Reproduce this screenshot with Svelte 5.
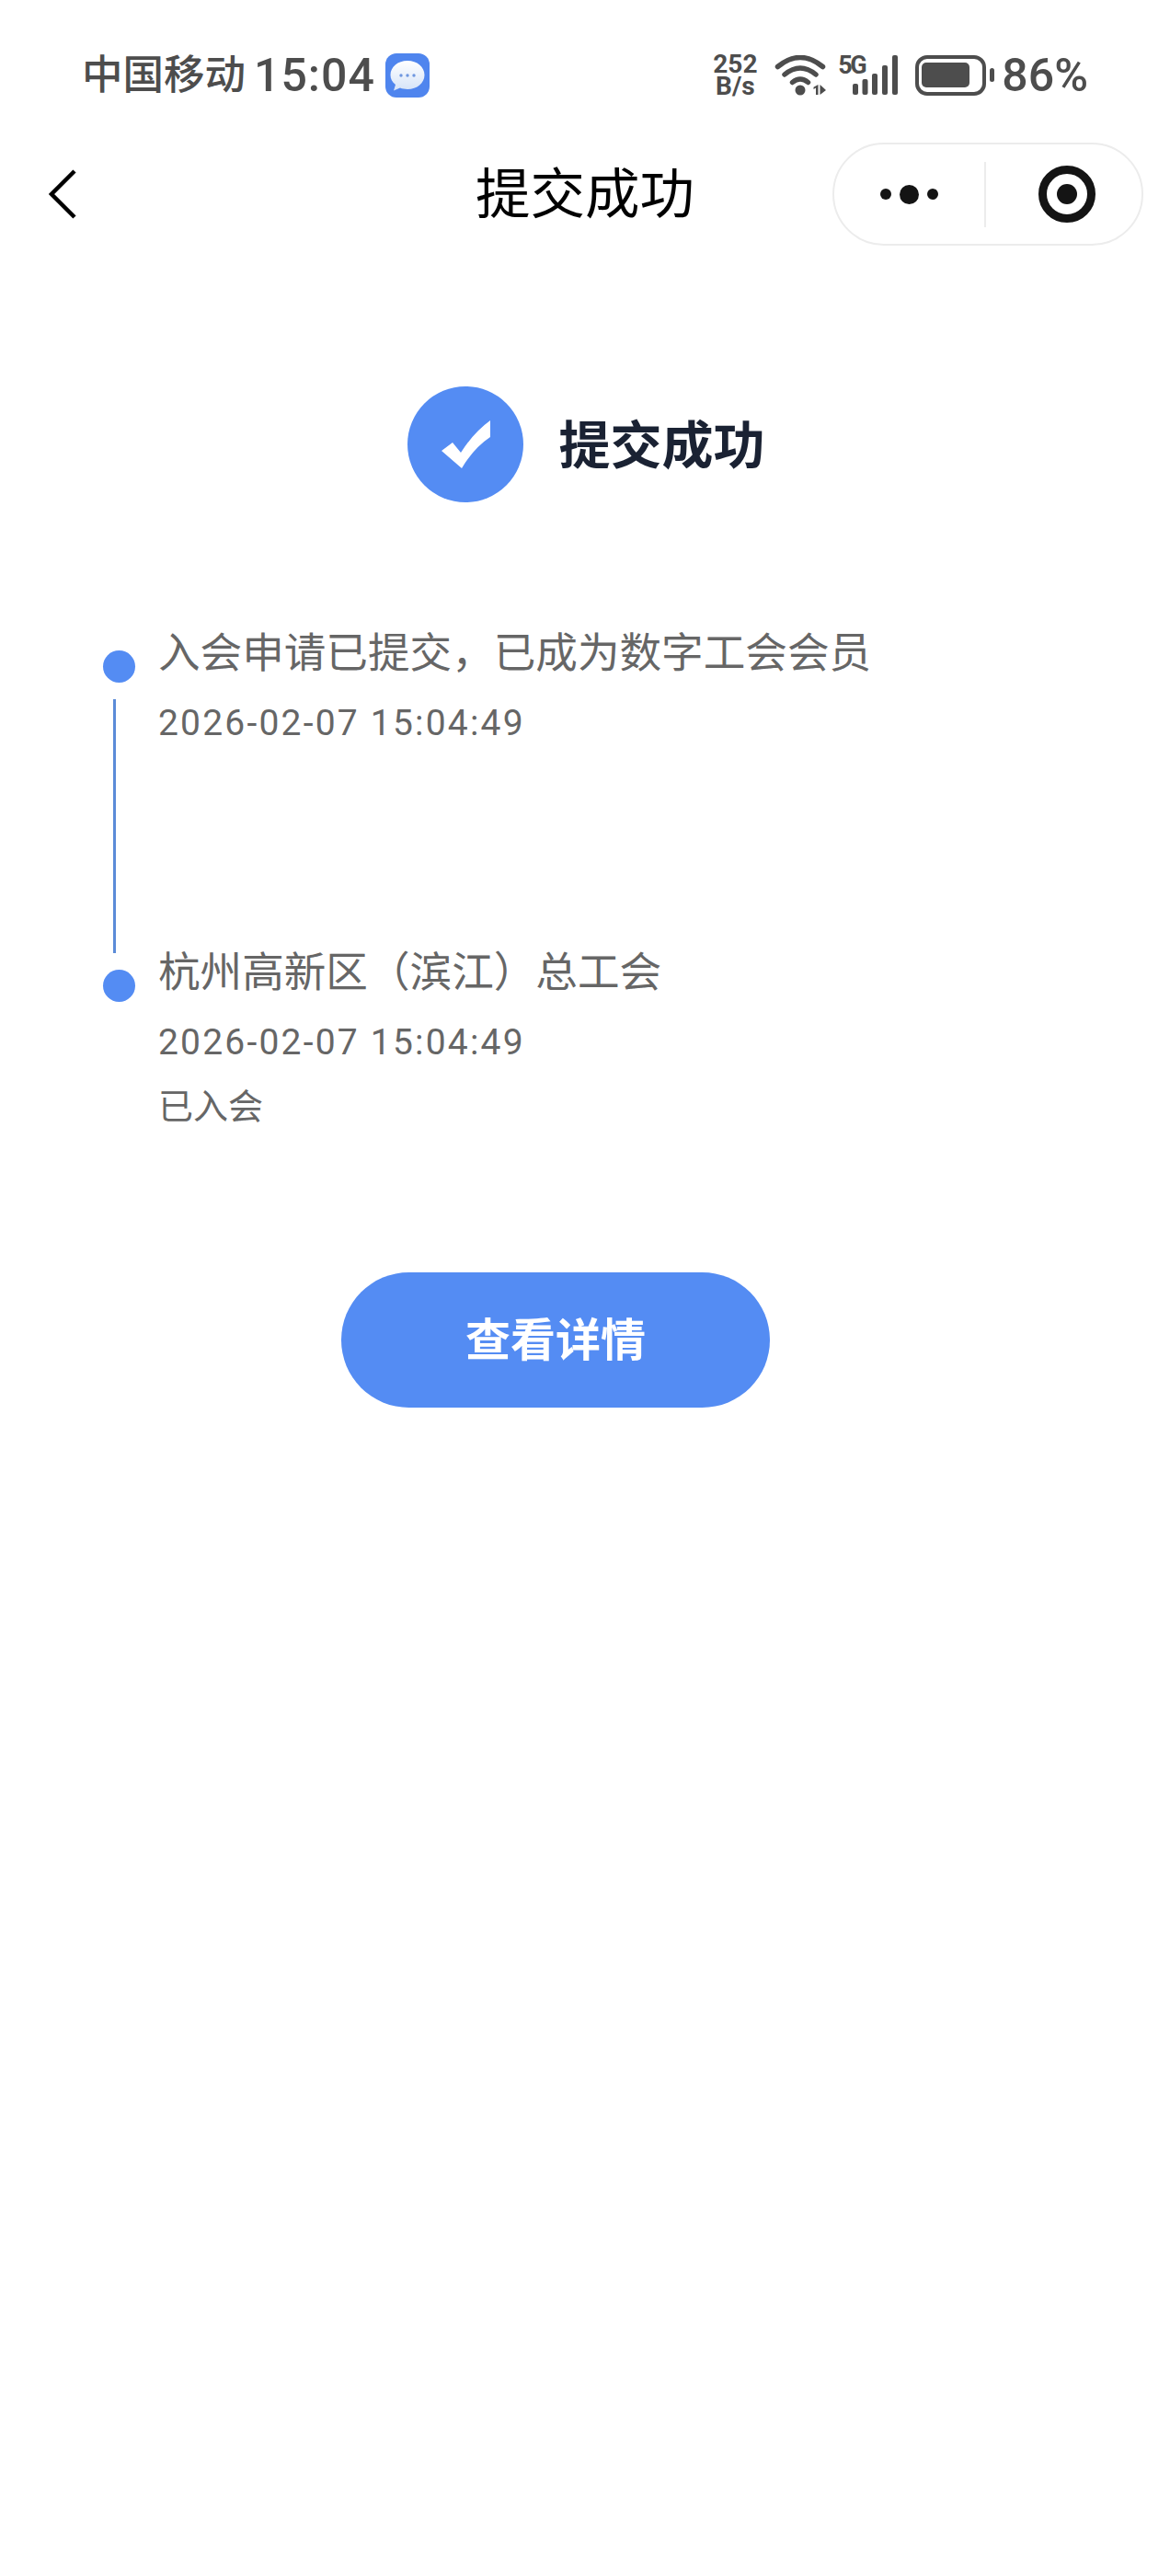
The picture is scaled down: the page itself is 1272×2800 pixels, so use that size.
<script>
  const steps = [
    { title: '入会申请已提交，已成为数字工会会员', time: '2026-02-07 15:04:49', line: true },
    { title: '杭州高新区（滨江）总工会', time: '2026-02-07 15:04:49', note: '已入会' }
  ];
</script>

<div class="page">
  <div class="status">
    <div class="left">
      <span class="carrier">中国移动</span>
      <span class="clock">15:04</span>
      <svg class="msg" width="48" height="48" viewBox="0 0 48 48" aria-hidden="true">
        <defs>
          <linearGradient id="bub" x1="0" y1="0" x2="0" y2="1">
            <stop offset="0" stop-color="#ffffff" />
            <stop offset="1" stop-color="#d5e3f8" />
          </linearGradient>
        </defs>
        <rect width="48" height="48" rx="12" fill="#4f85ee" />
        <path d="M24 8c10.500 0 18.500 6.800 18.500 15.500S34.500 39 24 39c-3 0-5.500-.4-8-1.400L9 40.500l2-6.500C7.300 31.200 5.500 27.500 5.500 23.500 5.500 14.800 13.500 8 24 8z" fill="url(#bub)" />
        <circle cx="17" cy="24" r="1.700" fill="#6f97e0" />
        <circle cx="24" cy="24" r="1.700" fill="#6f97e0" />
        <circle cx="31" cy="24" r="1.700" fill="#6f97e0" />
      </svg>
    </div>
    <div class="right">
      <div class="speed"><span>252</span><span>B/s</span></div>
      <svg class="wifi" width="56" height="44" viewBox="843 59 56 44" aria-hidden="true">
        <g fill="none" stroke="#4d4d4d" stroke-width="5.500" stroke-linecap="round">
          <path d="M846.500 71.500Q871 51.500 895.500 71.500" />
          <path d="M854 80Q871 66 888 80" />
          <path d="M862.500 88.500Q871 81.500 879.500 88.500" />
        </g>
        <circle cx="871" cy="97" r="5.500" fill="#4d4d4d" />
        <path d="M890.500 91v11h-2.500v-7.500l-2.500 1.500v-2.300z M892.500 91l6.500 6-6.500 5z" fill="#4d4d4d" />
      </svg>
      <div class="signal">
        <span class="fiveg">5G</span>
        <svg width="65" height="44" viewBox="912 59 65 44" aria-hidden="true">
          <g fill="#4d4d4d">
            <rect x="928" y="90" width="6" height="12" rx="2" />
            <rect x="938.500" y="85" width="6" height="17" rx="2" />
            <rect x="949" y="79" width="6" height="23" rx="2" />
            <rect x="960" y="70" width="6" height="32" rx="2" />
            <rect x="971" y="59" width="6" height="43" rx="2" />
          </g>
        </svg>
      </div>
      <svg class="battery" width="86" height="44" viewBox="996 59 86 44" aria-hidden="true">
        <rect x="998" y="61" width="73" height="40" rx="11" fill="none" stroke="#4d4d4d" stroke-width="4" />
        <rect x="1003" y="67" width="52" height="27" rx="5" fill="#4d4d4d" />
        <rect x="1077" y="73" width="5" height="15" rx="2.500" fill="#4d4d4d" />
      </svg>
      <span class="pct">86%</span>
    </div>
  </div>

  <div class="nav">
    <svg class="back" width="32" height="56" viewBox="0 0 32 56" aria-hidden="true">
      <path d="M29 3 4 28l25 25" fill="none" stroke="#000" stroke-width="4.500" />
    </svg>
    <div class="nav-title">提交成功</div>
    <div class="capsule">
      <div class="cap-side dots">
        <i class="dot-s"></i><i class="dot-l"></i><i class="dot-s"></i>
      </div>
      <div class="cap-div"></div>
      <div class="cap-side target">
        <svg width="62" height="62" viewBox="0 0 62 62" aria-hidden="true">
          <circle cx="31" cy="31" r="26.500" fill="none" stroke="#141414" stroke-width="9" />
          <circle cx="31" cy="31" r="11" fill="#141414" />
        </svg>
      </div>
    </div>
  </div>

  <div class="result">
    <svg width="126" height="126" viewBox="0 0 126 126" aria-hidden="true">
      <circle cx="63" cy="63" r="63" fill="#548cf3" />
      <path d="M37 70 49 61 58 72Q72 50 90 37V55Q72 67 59 89Z" fill="#fff" />
    </svg>
    <h1>提交成功</h1>
  </div>

  <div class="timeline">
    {#each steps as s}
      <div class="step">
        <div class="rail">
          <i class="node"></i>
          {#if s.line}<i class="bar"></i>{/if}
        </div>
        <div class="body">
          <div class="t-title">{s.title}</div>
          <div class="t-time">{s.time}</div>
          {#if s.note}<div class="t-note">{s.note}</div>{/if}
        </div>
      </div>
    {/each}
  </div>

  <button class="cta">查看详情</button>
</div>

<style>
  :global(body) {
    margin: 0;
    background: #fff;
  }
  .page {
    min-height: 2800px;
    background: #fff;
    font-family: Roboto, "Noto Sans CJK SC", sans-serif;
    overflow: hidden;
  }
  .status {
    display: flex;
    justify-content: space-between;
    align-items: center;
    box-sizing: border-box;
    height: 130px;
    padding: 34px 89px 0 89px;
    color: #4d4d4d;
  }
  .left, .right {
    display: flex;
    align-items: center;
  }
  .carrier {
    font-size: 44.500px;
    font-weight: 500;
    line-height: 48px;
  }
  .clock {
    margin-left: 9px;
    font-size: 50px;
    font-weight: 500;
    line-height: 48px;
    letter-spacing: 1px;
  }
  .msg { margin-left: 11px; }
  .speed {
    display: flex;
    flex-direction: column;
    align-items: center;
    width: 48px;
    font-size: 28px;
    font-weight: 700;
    line-height: 24px;
  }
  .wifi { margin-left: 19px; }
  .signal {
    position: relative;
    margin-left: 13px;
    height: 44px;
  }
  .fiveg {
    position: absolute;
    left: 0;
    top: -3px;
    font-size: 27px;
    font-weight: 700;
    line-height: 28px;
    letter-spacing: -2.500px;
  }
  .battery { margin-left: 19px; }
  .pct {
    margin-left: 8px;
    font-size: 50px;
    line-height: 48px;
    font-weight: 500;
  }
  .nav {
    display: grid;
    grid-template-columns: 1fr auto 1fr;
    grid-template-rows: 112px;
    align-items: center;
    padding: 25px 29px 0;
  }
  .back { margin-left: 23px; }
  .nav-title {
    font-size: 59.500px;
    line-height: 112px;
    padding-top: 2px;
    color: #000;
  }
  .capsule {
    justify-self: end;
    display: flex;
    align-items: center;
    box-sizing: border-box;
    width: 338px;
    height: 112px;
    border: 2px solid #ececec;
    border-radius: 56px;
    background: #fff;
  }
  .cap-side {
    flex: 1;
    display: flex;
    align-items: center;
    justify-content: center;
  }
  .target { padding-left: 7px; }
  .dots { gap: 9px; padding-right: 1px; }
  .dot-s, .dot-l {
    display: block;
    border-radius: 50%;
    background: #141414;
  }
  .dot-s { width: 12px; height: 12px; }
  .dot-l { width: 21px; height: 21px; }
  .cap-div {
    width: 2px;
    height: 71px;
    background: #ececec;
  }
  .result {
    display: flex;
    align-items: center;
    justify-content: center;
    gap: 39px;
    margin-top: 153px;
    padding-left: 2px;
  }
  .result h1 {
    margin: 0;
    padding-top: 3px;
    font-size: 56px;
    font-weight: 700;
    line-height: 70px;
    color: #1a2233;
  }
  .timeline {
    margin-top: 134px;
    padding-left: 112px;
  }
  .step {
    display: flex;
    gap: 25px;
  }
  .rail {
    display: flex;
    flex-direction: column;
    width: 35px;
    height: 347px;
    padding-top: 27px;
    box-sizing: border-box;
  }
  .step:last-child .rail { height: 200px; }
  .node {
    display: block;
    flex: none;
    width: 35px;
    height: 35px;
    border-radius: 50%;
    background: #548cf3;
  }
  .bar {
    display: block;
    flex: none;
    width: 3px;
    height: 276px;
    margin: 18px 0 0 11px;
    background: #5b8bd8;
  }
  .t-title {
    font-size: 45.600px;
    line-height: 62px;
    color: #666;
  }
  .t-time {
    margin-top: 19px;
    font-size: 39px;
    line-height: 50px;
    color: #666;
    letter-spacing: 2.200px;
  }
  .t-note {
    margin-top: 20px;
    font-size: 38px;
    line-height: 50px;
    color: #666;
  }
  .cta {
    display: block;
    width: 466px;
    height: 147px;
    margin: 155px 0 0 371px;
    padding: 0 0 8px;
    border: none;
    border-radius: 74px;
    background: #548cf3;
    color: #fff;
    font-family: inherit;
    font-size: 49px;
    font-weight: 700;
  }
</style>
